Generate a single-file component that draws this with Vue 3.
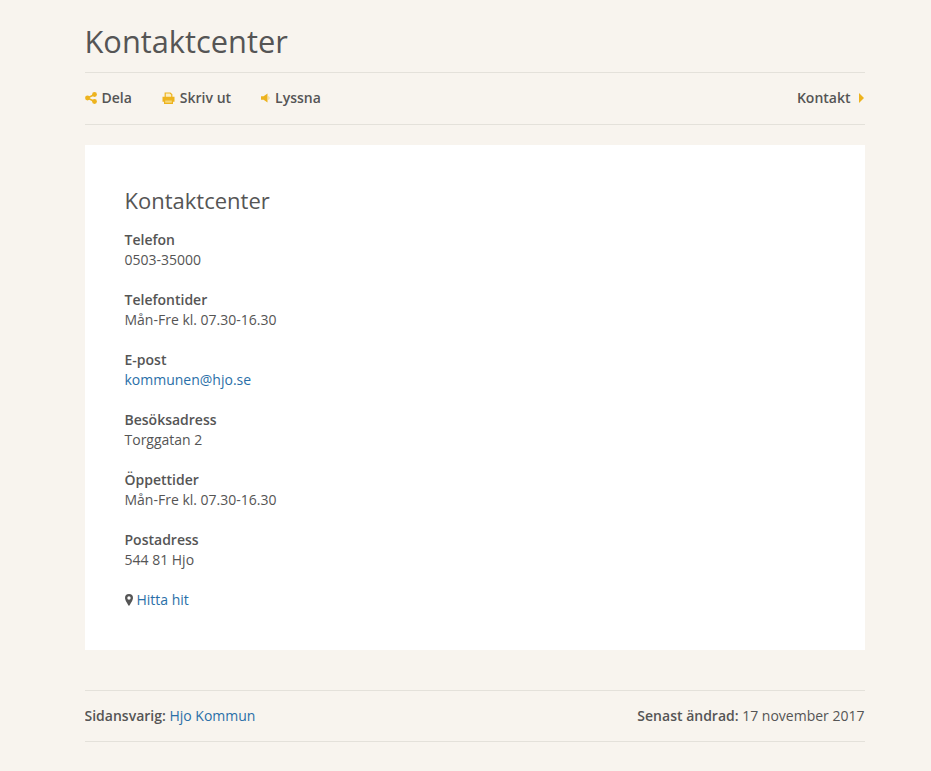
<template>
  <div class="page">
    <h1 class="title">Kontaktcenter</h1>

    <div class="tools">
      <div class="tools-left">
        <a class="tool">
          <svg class="ico" width="12" height="12" viewBox="0 0 12 12">
            <path d="M9.500 2.500 2.500 6l7 3.500" fill="none" stroke="#edb31e" stroke-width="1.500" />
            <circle cx="9.500" cy="2.500" r="2.400" fill="#edb31e" />
            <circle cx="2.500" cy="6" r="2.400" fill="#edb31e" />
            <circle cx="9.500" cy="9.500" r="2.400" fill="#edb31e" />
          </svg>
          Dela
        </a>
        <a class="tool">
          <svg class="ico" width="13" height="12" viewBox="0 0 13 12">
            <path d="M3.200 5V1h5l1.600 1.500V5" fill="#fbeec4" stroke="#edb31e" stroke-width="1.200" />
            <path d="M0.500 4.800h12v5H11V8H2v1.800H0.500z" fill="#edb31e" />
            <path d="M2.600 7.800h7.800v3.600H2.600z" fill="#f6d777" stroke="#edb31e" stroke-width="1.200" />
          </svg>
          Skriv ut
        </a>
        <a class="tool">
          <svg class="ico" width="9" height="10" viewBox="0 0 9 10">
            <path d="M0 3.300h2.600L6.500 0.500v9L2.600 6.700H0z" fill="#edb31e" />
            <path d="M7.600 3.500q1 1.500 0 3" fill="none" stroke="#f3cf6c" stroke-width="1" />
          </svg>
          Lyssna
        </a>
      </div>
      <a class="tool contact">
        Kontakt
        <svg class="arrow" width="5" height="10" viewBox="0 0 5 10">
          <path d="M0 0l5 5-5 5z" fill="#edb31e" />
        </svg>
      </a>
    </div>

    <main class="card">
      <h2 class="card-title">Kontaktcenter</h2>
      <div v-for="item in items" :key="item.label" class="item">
        <strong>{{ item.label }}</strong>
        <a v-if="item.link" class="link">{{ item.value }}</a>
        <span v-else>{{ item.value }}</span>
      </div>
      <div class="find">
        <svg class="pin" width="8" height="12" viewBox="0 0 8 12">
          <path
            fill-rule="evenodd"
            d="M4 0a4 4 0 0 1 4 4c0 2-2.500 6-4 8C2.500 10 0 6 0 4a4 4 0 0 1 4-4zm0 2.300a1.700 1.700 0 1 0 0 3.400 1.700 1.700 0 0 0 0-3.400z"
            fill="#555"
          />
        </svg>
        <a class="link">Hitta hit</a>
      </div>
    </main>

    <footer class="foot">
      <div><strong>Sidansvarig:</strong> <a class="link">Hjo Kommun</a></div>
      <div><strong>Senast ändrad:</strong> 17 november 2017</div>
    </footer>
  </div>
</template>

<script setup>
const items = [
  { label: "Telefon", value: "0503-35000" },
  { label: "Telefontider", value: "Mån-Fre kl. 07.30-16.30" },
  { label: "E-post", value: "kommunen@hjo.se", link: true },
  { label: "Besöksadress", value: "Torggatan 2" },
  { label: "Öppettider", value: "Mån-Fre kl. 07.30-16.30" },
  { label: "Postadress", value: "544 81 Hjo" },
];
</script>

<style>
html,
body {
  background: #f8f4ee;
}
</style>

<style scoped>
.page {
  width: 780px;
  height: 771px;
  margin-left: 84.5px;
  overflow: hidden;
  font-family: "Open Sans", sans-serif;
  font-size: 14px;
  line-height: 20px;
  color: #555;
}

.title {
  margin: 0;
  height: 72px;
  font-size: 30.8px;
  font-weight: 400;
  line-height: 83px;
  border-bottom: 1px solid #e4e1da;
}

.tools {
  display: flex;
  justify-content: space-between;
  align-items: center;
  height: 51px;
  box-sizing: content-box;
  border-bottom: 1px solid #e4e1da;
}

.tools-left,
.contact {
  margin-bottom: 2px;
}

.tools-left {
  display: flex;
  gap: 30px;
}

.tool {
  display: flex;
  align-items: center;
  font-weight: 600;
}

.ico {
  margin-right: 5px;
}

.arrow {
  margin: 0 1px 0 8px;
}

.card {
  margin-top: 20px;
  height: 505px;
  box-sizing: border-box;
  padding: 40px;
  background: #fff;
}

.card-title {
  margin: 0 0 15px;
  font-size: 22px;
  font-weight: 400;
  line-height: 30px;
}

.item {
  margin-bottom: 20px;
}

.item strong,
.item span,
.item a {
  display: block;
}

strong {
  font-weight: 600;
}

.link {
  color: #2a6fa8;
}

.pin {
  margin-right: 4px;
  vertical-align: -1px;
}

.foot {
  display: flex;
  justify-content: space-between;
  align-items: center;
  margin-top: 40px;
  height: 50px;
  border-top: 1px solid #e4e1da;
  border-bottom: 1px solid #e4e1da;
}
</style>
